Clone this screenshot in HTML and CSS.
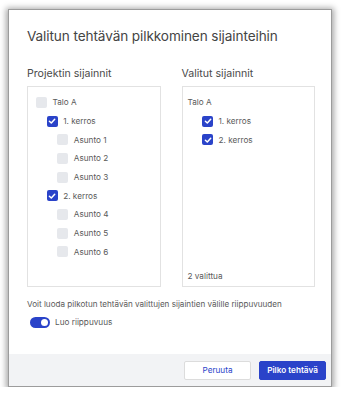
FILE: index.html
```html
<!DOCTYPE html>
<html lang="fi">
<head>
    <meta charset="UTF-8">
    <meta name="viewport" content="width=device-width, initial-scale=1.0">
    <title>Pilko tehtävä</title>
    <link rel="stylesheet" href="styles.css">
</head>
<body>
    <div class="dialog">
        <div class="dialog-body">
            <h1>Valitun tehtävän pilkkominen sijainteihin</h1>

            <div class="columns">
                <div class="column">
                    <h2>Projektin sijainnit</h2>
                    <div class="box">
                        <div class="row"><span class="check"></span>Talo A</div>
                        <div class="row level-1"><span class="check checked"><svg viewBox="0 0 10 10"><path d="M2.4 5.2 L4.3 7 L7.7 3.2"/></svg></span>1. kerros</div>
                        <div class="row level-2"><span class="check"></span>Asunto 1</div>
                        <div class="row level-2"><span class="check"></span>Asunto 2</div>
                        <div class="row level-2"><span class="check"></span>Asunto 3</div>
                        <div class="row level-1"><span class="check checked"><svg viewBox="0 0 10 10"><path d="M2.4 5.2 L4.3 7 L7.7 3.2"/></svg></span>2. kerros</div>
                        <div class="row level-2"><span class="check"></span>Asunto 4</div>
                        <div class="row level-2"><span class="check"></span>Asunto 5</div>
                        <div class="row level-2"><span class="check"></span>Asunto 6</div>
                    </div>
                </div>
                <div class="column">
                    <h2>Valitut sijainnit</h2>
                    <div class="box selected">
                        <div class="row plain">Talo A</div>
                        <div class="row sel-child"><span class="check checked"><svg viewBox="0 0 10 10"><path d="M2.4 5.2 L4.3 7 L7.7 3.2"/></svg></span>1. kerros</div>
                        <div class="row sel-child"><span class="check checked"><svg viewBox="0 0 10 10"><path d="M2.4 5.2 L4.3 7 L7.7 3.2"/></svg></span>2. kerros</div>
                        <div class="row plain count">2 valittua</div>
                    </div>
                </div>
            </div>

            <p class="hint">Voit luoda pilkotun tehtävän valittujen sijaintien välille riippuvuuden</p>

            <div class="toggle-row">
                <span class="toggle"></span>
                <span>Luo riippuvuus</span>
            </div>
        </div>

        <div class="dialog-footer">
            <button class="btn btn-secondary">Peruuta</button>
            <button class="btn btn-primary">Pilko tehtävä</button>
        </div>
    </div>
</body>
</html>
```

FILE: styles.css
```css
body {
    margin: 0;
    background-color: #ffffff;
    font-family: Inter, 'Noto Sans', sans-serif;
    color: #4b4b4b;
}

.dialog {
    width: 324px;
    height: 378px;
    box-sizing: border-box;
    margin: 9px 0 0 8px;
    background-color: white;
    border: 1px solid #9c9c9c;
    box-shadow: 0 1px 6px 2px rgba(0, 0, 0, 0.35);
    display: flex;
    flex-direction: column;
}

.dialog-body {
    flex: 1;
    padding: 16px 16px 0 18px;
}

h1 {
    margin: 0;
    font-size: 13.6px;
    line-height: 20px;
    font-weight: 400;
    color: #444;
    letter-spacing: -0.1px;
}

.columns {
    display: flex;
    gap: 21px;
    margin-top: 20px;
}

.column {
    flex: 1;
    display: flex;
    flex-direction: column;
}

h2 {
    margin: 0 0 4px;
    font-size: 10.6px;
    line-height: 16px;
    font-weight: 400;
    color: #4a4a4a;
}

.box {
    height: 201px;
    box-sizing: border-box;
    border: 1px solid #e2e2e2;
    padding: 6px 0 1px 8px;
    display: flex;
    flex-direction: column;
}

.box.selected {
    padding-left: 5px;
}

.row {
    height: 18.7px;
    display: flex;
    align-items: center;
    font-size: 8.2px;
    color: #5a5a5a;
}

.level-1 {
    padding-left: 10.7px;
}

.level-2 {
    padding-left: 21.3px;
}

.sel-child {
    padding-left: 14.5px;
}

.count {
    margin-top: auto;
}

/* Checkbox */
.check {
    width: 11px;
    height: 11px;
    border-radius: 2px;
    background-color: #e6e8ec;
    margin-right: 5.5px;
    display: flex;
    align-items: center;
    justify-content: center;
    flex-shrink: 0;
}

.check.checked {
    background-color: #2a43c9;
}

.check svg {
    width: 10px;
    height: 10px;
    fill: none;
    stroke: white;
    stroke-width: 1.5;
    stroke-linecap: round;
    stroke-linejoin: round;
}

.hint {
    margin: 10px 0 0;
    font-size: 8.1px;
    line-height: 14px;
    color: #5a5a5a;
}

.toggle-row {
    display: flex;
    align-items: center;
    margin: 5px 0 0 3px;
    height: 12px;
    font-size: 8.2px;
    color: #5a5a5a;
}

.toggle {
    position: relative;
    width: 20px;
    height: 11px;
    border-radius: 6px;
    background-color: #2a43c9;
    margin-right: 5px;
}

.toggle:before {
    position: absolute;
    content: "";
    width: 7px;
    height: 7px;
    top: 2px;
    right: 2px;
    border-radius: 50%;
    background-color: white;
}

.dialog-footer {
    height: 32px;
    background-color: #f2f3f5;
    display: flex;
    align-items: center;
    justify-content: flex-end;
    gap: 8px;
    padding-right: 5px;
}

.btn {
    height: 19px;
    width: 67px;
    border-radius: 2px;
    font-family: Inter, 'Noto Sans', sans-serif;
    font-size: 8.2px;
    padding: 0;
    cursor: pointer;
}

.btn-secondary {
    background-color: white;
    border: 1px solid #dcdcdc;
    color: #2a43c9;
}

.btn-primary {
    background-color: #2a43c9;
    border: 1px solid #2a43c9;
    color: white;
    font-weight: 600;
}
```
